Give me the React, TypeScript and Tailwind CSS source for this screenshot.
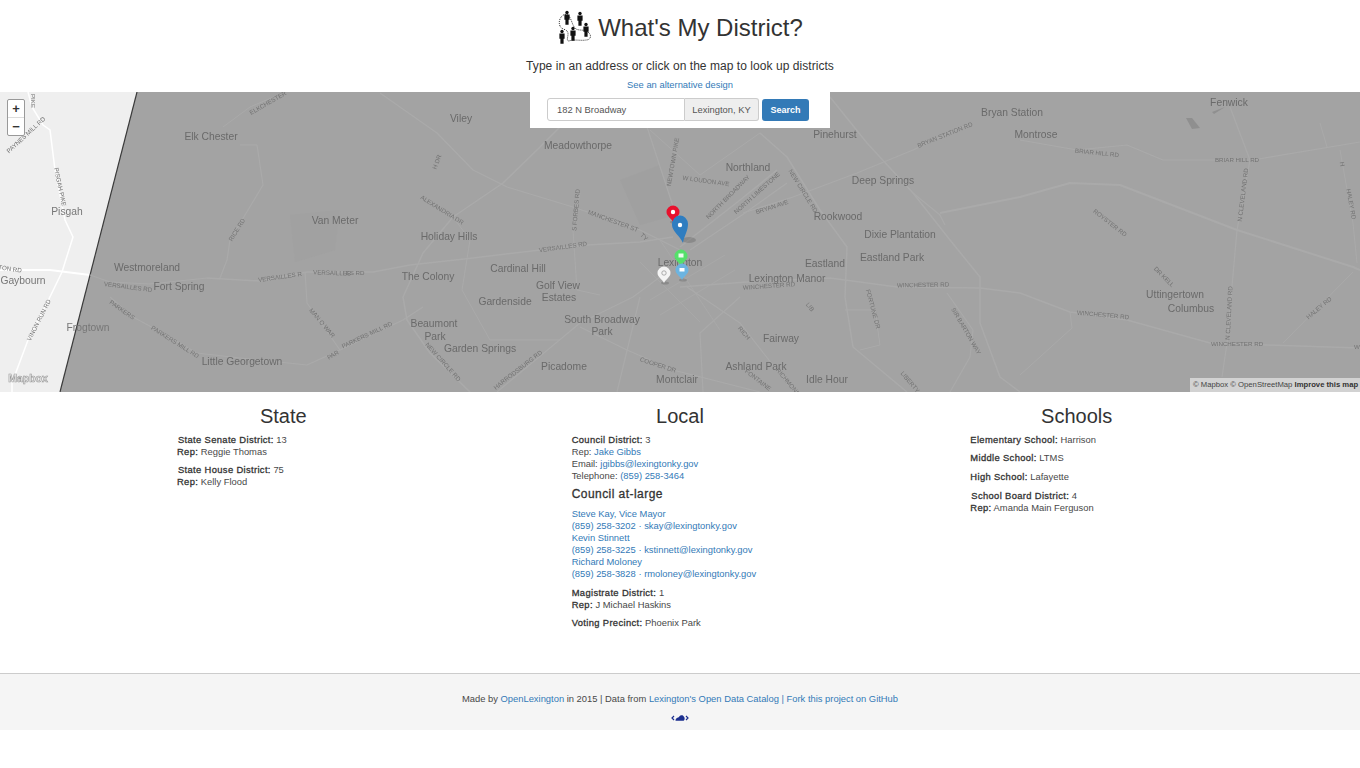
import React from 'react';

const roads: [string, number][] = [
  ['M207,278 L260,281 L307,272 L373,272 L410,265 L473,258 L540,250 L587,245 L640,242 L673,237', 1.5],
  ['M90,275 L110,282 L150,284 L207,278', 1.2],
  ['M257,145 L263,185 L230,240 L227,260 L220,278', 1.2],
  ['M223,127 L250,107 L283,93', 1],
  ['M240,145 L257,145', 1],
  ['M110,297 L133,317 L157,330 L197,353 L240,358 L307,365 L340,350 L403,320 L423,307', 1.2],
  ['M305,272 L307,303 L340,350', 1.2],
  ['M470,392 L430,353 L407,320 L403,297 L423,253 L453,217 L503,183 L540,147 L560,127', 1.5],
  ['M380,93 L437,133 L473,170 L507,187 L573,207 L640,230 L680,250', 1.2],
  ['M497,392 L580,323 L633,297 L660,277', 1.2],
  ['M580,193 L573,230 L577,290 L600,295', 1],
  ['M647,127 L670,197 L676,215', 1.2],
  ['M680,247 L740,200 L777,170', 1.5],
  ['M690,250 L745,213 L787,183', 1.2],
  ['M743,213 L793,197 L857,173 L913,150 L970,123', 1.2],
  ['M760,133 L787,157 L820,210 L847,247 L845,297 L853,347 L907,392', 1.5],
  ['M830,97 L867,143 L913,193 L950,240 L980,277 L980,323 L1000,377 L1020,392', 1.5],
  ['M940,213 L1020,197 L1070,183 L1120,185 L1237,230 L1353,267 L1360,270', 2],
  ['M913,193 L940,215 L945,225', 1.2],
  ['M680,287 L747,282 L830,278 L897,287 L980,288 L1020,293 L1070,312 L1127,320 L1210,343 L1360,348', 1.5],
  ['M1020,140 L1077,150 L1127,145 L1163,160 L1253,160 L1360,142', 1.2],
  ['M1250,160 L1237,230 L1227,343 L1222,377', 1.2],
  ['M1230,107 L1250,160', 1.2],
  ['M1340,150 L1353,223 L1357,263', 1],
  ['M1320,123 L1327,147', 1],
  ['M1353,272 L1283,343', 1],
  ['M1070,312 L1072,328 L1020,375', 1],
  ['M947,293 L973,330 L970,357 L950,392', 1.2],
  ['M687,287 L740,323 L790,387', 1.2],
  ['M740,297 L700,333 L703,392', 1.2],
  ['M640,297 L617,392', 1.2],
  ['M580,327 L627,350 L673,370 L760,392', 1.2],
  ['M660,240 L720,330', 0.8],
  ['M640,262 L700,322', 0.8],
  ['M650,300 L725,255', 0.8],
  ['M660,315 L735,270', 0.8],
  ['M845,310 L875,310 L880,345 L860,350', 1],
  ['M650,130 L700,175 L760,133', 1],
  ['M453,217 L470,240 L462,290 L490,340 L560,340', 1],
];

const lightRoads: [string, number][] = [
  ['M28,92 L32,107 L43,125 L50,130 L55,170 L65,220 L73,237 L62,272 L47,303 L28,340 L12,383 L12,392', 1.5],
  ['M0,270 L50,270 L90,275', 2],
];

const places: [string, number, number][] = [
  ['Elk Chester', 211, 136], ['Westmoreland', 147, 267], ['Fort Spring', 179, 286],
  ['Van Meter', 335, 220], ['Little Georgetown', 242, 361], ['Viley', 461, 118],
  ['Meadowthorpe', 578, 145], ['Holiday Hills', 449, 236], ['The Colony', 428, 276],
  ['Cardinal Hill', 518, 268], ['Golf View', 558, 285], ['Estates', 559, 297],
  ['Gardenside', 505, 301], ['South Broadway', 602, 319], ['Park', 602, 331],
  ['Beaumont', 434, 323], ['Park', 435, 336], ['Garden Springs', 480, 348],
  ['Picadome', 564, 366], ['Montclair', 677, 379], ['Lexington', 680, 262],
  ['Northland', 748, 167], ['Pinehurst', 835, 134], ['Bryan Station', 1012, 112],
  ['Montrose', 1036, 134], ['Fenwick', 1229, 102], ['Deep Springs', 883, 180],
  ['Rookwood', 838, 216], ['Dixie Plantation', 900, 234], ['Eastland Park', 892, 257],
  ['Eastland', 825, 263], ['Lexington Manor', 787, 278], ['Fairway', 781, 338],
  ['Ashland Park', 756, 366], ['Idle Hour', 827, 379], ['Uttingertown', 1175, 294],
  ['Columbus', 1191, 308],
];

const lightPlaces: [string, number, number][] = [
  ['Pisgah', 67, 211], ['Gaybourn', 23, 280], ['Frogtown', 88, 327],
];

const streets: [string, number, number, number][] = [
  ['PIKE', 33, 101, 90], ['PAYNES MILL RD', 26, 135, -43], ['PISGAH PIKE', 60, 187, 78],
  ['TON RD', 10, 269, 8], ['VINON RUN RD', 39, 320, -63], ['VERSAILLES RD', 128, 287, 7],
  ['PARKERS', 122, 310, 35], ['PARKERS MILL RD', 175, 342, 32], ['VERSAILLES R', 280, 277, -8],
  ['VERSAILLES', 332, 273, 2], ['MAN O WAR', 322, 323, 50], ['RICE RD', 237, 230, -58],
  ['ELKCHESTER', 268, 103, -30], ['PAR', 333, 355, -30], ['ES RD', 355, 273, 0],
  ['H DR', 437, 162, -70], ['ALEXANDRIA DR', 442, 210, 32], ['VERSAILLES RD', 563, 247, -8],
  ['S FORBES RD', 576, 210, -85], ['MANCHESTER ST', 613, 221, 20], ['TY', 644, 237, 45],
  ['PARKERS MILL RD', 367, 335, -25], ['NEW CIRCLE RD', 443, 362, 48], ['HARRODSBURG RD', 518, 370, -38],
  ['COOPER DR', 658, 365, 18], ['NEWTOWN PIKE', 673, 162, -80], ['W LOUDON AVE', 706, 181, 8],
  ['NORTH BROADWAY', 728, 197, -45], ['NORTH LIMESTONE', 757, 193, -42], ['BRYAN AVE', 772, 207, -18],
  ['NEW CIRCLE RD', 803, 191, 58], ['BRYAN STATION RD', 945, 135, -22], ['WINCHESTER RD', 769, 286, -4],
  ['LIB', 810, 307, 50], ['RICH', 744, 333, 50], ['FORTUNE DR', 873, 309, 75],
  ['WINCHESTER RD', 923, 285, -1], ['SIR BARTON WAY', 966, 331, 60], ['LIBERTY', 910, 382, 50],
  ['FONTAINE', 758, 380, 38], ['RICHMOND', 788, 382, 50], ['BRIAR HILL RD', 1097, 153, 6],
  ['BRIAR HILL RD', 1237, 160, 0], ['N CLEVELAND RD', 1243, 195, -83], ['ROYSTER RD', 1110, 223, 38],
  ['HALEY RD', 1351, 204, 80], ['H', 1342, 164, 80], ['DR KELL', 1164, 277, 45],
  ['WINCHESTER RD', 1103, 315, 5], ['N CLEVELAND RD', 1229, 313, -87], ['WINCHESTER RD', 1237, 344, 0],
  ['HALEY RD', 1319, 308, -40], ['W', 1357, 347, 0],
];

// small map marker, x/y is the tip
const Pin = ({ x, y, fill }: { x: number; y: number; fill: string }) => (
  <g>
    <ellipse cx={x + 1} cy={y} rx="4" ry="1.5" fill="#000" opacity="0.15" />
    <path d={`M${x},${y} C${x - 2},${y - 4} ${x - 6.5},${y - 6} ${x - 6.5},${y - 10} A6.5,6.5 0 1 1 ${x + 6.5},${y - 10} C${x + 6.5},${y - 6} ${x + 2},${y - 4} ${x},${y} Z`} fill={fill} />
  </g>
);

const MapCanvas = () => (
  <svg viewBox="0 92 1360 300" className="block w-full h-full blur-[0.35px]" style={{ fontFamily: '"Liberation Sans", Arial, sans-serif' }}>
    <rect x="0" y="92" width="1360" height="300" fill="#efefef" />
    {lightRoads.map(([d, w], i) => (
      <path key={i} d={d} fill="none" stroke="#fff" strokeWidth={w} />
    ))}
    <polygon points="137,92 1360,92 1360,392 60,392" fill="#a3a3a3" />
    <line x1="137" y1="92" x2="60" y2="392" stroke="#3a3a3a" strokeWidth="1.2" />
    <polygon points="620,180 660,165 675,215 640,225" fill="#9f9f9f" opacity="0.6" />
    <polygon points="290,215 340,210 335,250 295,262" fill="#a0a0a0" opacity="0.6" />
    <polygon points="1186,118 1192,118 1200,128 1192,129" fill="#8f8f8f" />
    <polygon points="1212,112 1225,107 1214,114" fill="#8f8f8f" />
    {roads.map(([d, w], i) => (
      <path key={i} d={d} fill="none" stroke="#aaaaaa" strokeWidth={w} strokeLinejoin="round" />
    ))}
    {lightPlaces.map(([t, x, y], i) => (
      <text key={i} x={x} y={y + 4} textAnchor="middle" fontSize="10.3" fill="#777">{t}</text>
    ))}
    {places.map(([t, x, y], i) => (
      <text key={i} x={x} y={y + 4} textAnchor="middle" fontSize="10.3" fill="#6a6a6a">{t}</text>
    ))}
    {streets.map(([t, x, y, a], i) => (
      <text key={i} x={x} y={y + 2} textAnchor="middle" fontSize="6.2" fill="#727272" transform={`rotate(${a} ${x} ${y})`}>{t}</text>
    ))}
    <text x="28" y="382" textAnchor="middle" fontSize="10.5" fontWeight="700" fill="#eee" stroke="#999" strokeWidth="0.6">Mapbox</text>
    {/* markers */}
    <Pin x={673} y={222} fill="#e8112d" />
    <circle cx="673" cy="212" r="2.2" fill="#fff" />
    <ellipse cx="689" cy="240" rx="7" ry="3" fill="#000" opacity="0.15" />
    <path d="M683,243 C680,236 672,231 672,225 A8,9 0 0 1 688,224 C688,231 684,236 683,243 Z" fill="#2f7dc0" />
    <circle cx="680" cy="225" r="2.2" fill="#fff" />
    <Pin x={681} y={266} fill="#55e06a" />
    <rect x="678.5" y="253.5" width="5" height="4" fill="#fff" opacity="0.9" />
    <Pin x={682} y={280} fill="#6cb4e0" />
    <rect x="679.5" y="268" width="5" height="3.5" fill="#fff" />
    <Pin x={664} y={283} fill="#f4f4f4" />
    <circle cx="664" cy="273" r="2.2" fill="none" stroke="#999" strokeWidth="0.8" />
  </svg>
);

const DistrictIcon = () => {
  const people = [[566, 13], [579, 14], [585, 25], [572, 29], [561, 32]];
  return (
    <svg viewBox="556 12 36 36" className="w-9 h-9 block">
      <path d="M559,28 C556,21 563,14 567,17 C571,21 571,28 575,31 C579,33 583,31 587,34 C591,37 590,42 585,42 C580,43 573,41 568,43 C564,43 569,36 566,33 C564,31 560,31 559,28 Z" fill="none" stroke="#333" strokeWidth="1" strokeDasharray="1 1" />
      {people.map(([x, y], i) => (
        <g key={i} fill="#111">
          <circle cx={x} cy={y + 1.5} r="1.7" />
          <path d={`M${x - 2.6},${y + 3.6} h5.2 v5.2 h-1 v5 h-3.2 v-5 h-1 Z`} />
        </g>
      ))}
    </svg>
  );
};

const A = ({ children }: { children: React.ReactNode }) => (
  <a href="#" className="text-[#337ab7] no-underline">{children}</a>
);

// field names read semi-bold in the picture, the font has no such face
const L = ({ children, nudge }: { children: React.ReactNode; nudge?: boolean }) => (
  <span className={`tracking-[0.35px] [-webkit-text-stroke:0.3px_#333] text-[#333] ${nudge ? 'ml-px' : ''}`}>{children}</span>
);

export default function App() {
  return (
    <div className="bg-white text-[#484848] text-[9.4px] leading-[12px]" style={{ fontFamily: '"Liberation Sans", Arial, sans-serif' }}>
      {/* Header */}
      <header className="flex flex-col items-center pt-[10px] pb-px">
        <div className="flex items-center gap-[5px] h-9 text-[#333]">
          <DistrictIcon />
          <h1 className="text-2xl leading-9 font-normal">What's My District?</h1>
        </div>
        <p className="mt-[14px] text-xs leading-3 tracking-[0.05px] text-[#333]">Type in an address or click on the map to look up districts</p>
        <a href="#" className="mt-[7px] text-[#337ab7]">See an alternative design</a>
      </header>

      {/* Map */}
      <section className="relative h-[300px] overflow-hidden">
        <MapCanvas />
        <div className="absolute top-0 left-[530px] w-[300px] h-9 bg-white flex items-start pt-[6px] pl-[17px]">
          <div className="flex h-[23px] w-[212px]">
            <div className="w-[138px] border border-[#ccc] rounded-l-[3px] pl-[9px] flex items-center text-[#555]">182 N Broadway</div>
            <div className="w-[74px] border border-l-0 border-[#ccc] rounded-r-[3px] bg-[#eee] flex items-center justify-center text-[#555]">Lexington, KY</div>
          </div>
          <button className="ml-[3px] mt-px w-[47px] h-[22px] rounded-[3px] bg-[#337ab7] text-white font-bold text-[9px]">Search</button>
        </div>
        <div className="absolute top-[7px] left-[7px] w-[18px] flex flex-col bg-white border border-[#999] rounded-[2px]">
          <button className="h-[18px] border-b border-[#ddd] font-bold text-[13px] leading-none text-[#333]">+</button>
          <button className="h-[17px] font-bold text-[13px] leading-none text-[#333]">−</button>
        </div>
        <div className="absolute right-0 bottom-0 h-[14px] w-[170px] bg-[#d2d2d2] pl-[3px] text-[7.7px] leading-[14px] text-[#444] whitespace-nowrap">
          © Mapbox © OpenStreetMap <b className="text-[#333]">Improve this map</b>
        </div>
      </section>

      {/* Districts */}
      <main className="w-[1190px] mx-auto grid grid-cols-3 pt-[13px] pb-[44px]">
        <div>
          <h2 className="text-xl leading-[22px] text-center font-normal text-[#333] mb-[7px]">State</h2>
          <div className="pl-[92px]">
            <p className="mb-[6px]"><L nudge>State Senate District:</L> 13<br /><L>Rep:</L> Reggie Thomas</p>
            <p><L nudge>State House District:</L> 75<br /><L>Rep:</L> Kelly Flood</p>
          </div>
        </div>
        <div>
          <h2 className="text-xl leading-[22px] text-center font-normal text-[#333] mb-[7px]">Local</h2>
          <div className="pl-[90px]">
            <p><L>Council District:</L> 3<br />Rep: <A>Jake Gibbs</A><br />Email: <A>jgibbs@lexingtonky.gov</A><br />Telephone: <A>(859) 258-3464</A></p>
            <h4 className="text-xs leading-[14px] font-normal tracking-[0.45px] [-webkit-text-stroke:0.3px_#333] text-[#333] mt-[5px] mb-[7px]">Council at-large</h4>
            <p className="mb-[7px]">
              <A>Steve Kay, Vice Mayor</A><br />
              <A>(859) 258-3202</A> <A>·</A> <A>skay@lexingtonky.gov</A><br />
              <A>Kevin Stinnett</A><br />
              <A>(859) 258-3225</A> <A>·</A> <A>kstinnett@lexingtonky.gov</A><br />
              <A>Richard Moloney</A><br />
              <A>(859) 258-3828</A> <A>·</A> <A>rmoloney@lexingtonky.gov</A>
            </p>
            <p className="mb-[6px]"><L>Magistrate District:</L> 1<br /><L>Rep:</L> J Michael Haskins</p>
            <p><L>Voting Precinct:</L> Phoenix Park</p>
          </div>
        </div>
        <div>
          <h2 className="text-xl leading-[22px] text-center font-normal text-[#333] mb-[7px]">Schools</h2>
          <div className="pl-[92px]">
            <p className="mb-[6px]"><L>Elementary School:</L> Harrison</p>
            <p className="mb-[7px]"><L>Middle School:</L> LTMS</p>
            <p className="mb-[7px]"><L>High School:</L> Lafayette</p>
            <p><L nudge>School Board District:</L> 4<br /><L>Rep:</L> Amanda Main Ferguson</p>
          </div>
        </div>
      </main>

      {/* Footer */}
      <footer className="bg-[#f5f5f5] border-t border-[#ccc] h-[57px] flex flex-col items-center pt-[19px]">
        <p>Made by <A>OpenLexington</A> in 2015 | Data from <A>Lexington's Open Data Catalog</A> <A>|</A> <A>Fork this project on GitHub</A></p>
        <svg viewBox="0 0 18 8" className="w-[18px] h-2 mt-[9px] block">
          <path d="M4.5,6.8 C4.5,4 7,3.5 8,3 C9,0.6 12.5,0.6 13,3 C14,3.5 14,6.8 12,6.8 Z" fill="#1c2f8f" />
          <path d="M3,2 L1,4 L3,6 M15,2 L17,4 L15,6" fill="none" stroke="#1c2f8f" strokeWidth="1.2" />
        </svg>
      </footer>
    </div>
  );
}
